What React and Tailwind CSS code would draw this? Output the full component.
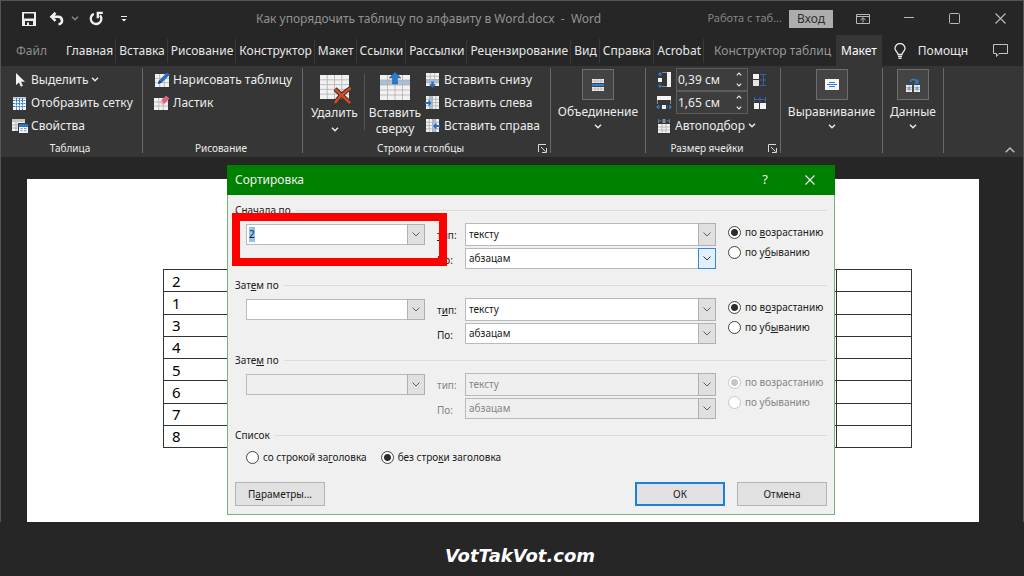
import { useEffect, useRef } from "react";

/* ---------- small shared pieces ---------- */

function Chevron({ className = "h-[5px] w-2" }) {
  return (
    <svg viewBox="0 0 8 5" className={className} fill="none" stroke="currentColor" strokeWidth="1.4" aria-hidden="true">
      <path d="M1 .8 4 3.8 7 .8" />
    </svg>
  );
}

function Launcher({ label }) {
  return (
    <button type="button" aria-label={label} className="text-[#d8d8d8]">
      <svg viewBox="0 0 9 9" className="size-[9px]" fill="none" stroke="currentColor" aria-hidden="true">
        <path d="M.5 8V.5H8M3 3l4.5 4.5M8.5 4v4.5H4" />
      </svg>
    </button>
  );
}

/* ---------- ribbon icons ---------- */

function GridBase({ x = 0, y = 0, w = 14, h = 13, cols = 3, rows = 4, band }) {
  const lines = [];
  for (let i = 1; i < cols; i++) lines.push(`M${x + (w * i) / cols} ${y}v${h}`);
  for (let i = 1; i < rows; i++) lines.push(`M${x} ${y + (h * i) / rows}h${w}`);
  return (
    <g>
      <rect x={x} y={y} width={w} height={h} fill="#f1f1f1" />
      {band && <rect x={band[0]} y={band[1]} width={band[2]} height={band[3]} fill="#a9bfd6" />}
      <path d={lines.join("")} stroke="#b0b0b0" strokeWidth=".8" fill="none" />
    </g>
  );
}

function Icon({ size = "size-4", box = 16, children }) {
  return (
    <svg viewBox={`0 0 ${box} ${box}`} className={`${size} shrink-0`} aria-hidden="true">
      {children}
    </svg>
  );
}

const CursorIcon = () => (
  <Icon>
    <path d="M4 1v12l3-2.600 1.900 4.300 2-.9L9 9.700h4z" fill="#f1f1f1" />
  </Icon>
);
const GridlinesIcon = () => (
  <Icon>
    <rect x="1" y="2" width="13" height="13" fill="#f4f4f4" />
    <rect x="1" y="2" width="13" height="2" fill="#c9c9c9" />
    <path d="M1 5.500h13M1 8.500h13M1 11.500h13M4.500 3v12M7.500 3v12M10.500 3v12" stroke="#2f80d0" strokeWidth="1" strokeDasharray="2 .6" />
  </Icon>
);
const PropertiesIcon = () => (
  <Icon>
    <rect x="0" y="1" width="13" height="12" fill="#f1f1f1" />
    <rect x="0" y="1" width="13" height="3" fill="#c4c4c4" />
    <path d="M0 7h7M0 10h7M4 4v9" stroke="#b0b0b0" />
    <rect x="6" y="5" width="10" height="10" fill="#363636" />
    <rect x="7" y="6" width="9" height="9" fill="#f4f4f4" />
    <rect x="7" y="6" width="9" height="3" fill="#2f76c4" />
    <path d="M8.500 10.500h2M12 10.500h2.500M8.500 12.700h2M12 12.700h2.500" stroke="#7b98b8" />
  </Icon>
);
const DrawTableIcon = () => (
  <Icon>
    <GridBase x={1} y={2} w={14} h={13} cols={3} rows={3} />
    <path d="M4 12l1-3.500L13 .5l3 2L8 10.500z" fill="#2a6cb5" />
    <path d="M4 12l1-3.500L8 10.500z" fill="#17406f" />
  </Icon>
);
const EraserIcon = () => (
  <Icon>
    <GridBase x={0} y={3} w={14} h={12} cols={3} rows={3} />
    <path d="M6 6.500 12 .5l3.500 3L10 9.200H8z" fill="#e0607e" />
    <path d="M6 6.500 8 9.200h2L7.500 5z" fill="#f6b3c0" />
  </Icon>
);
const DeleteIcon = () => (
  <Icon size="size-8" box={32}>
    <GridBase x={1} y={3} w={29} h={24} cols={4} rows={5} />
    <path d="M16 17 31 31M32 16C25 20 20 25 16 31" stroke="#363636" strokeWidth="4.500" fill="none" />
    <path d="M16 17 31 31M32 16C25 20 20 25 16 31" stroke="#d8481f" strokeWidth="2.400" fill="none" />
  </Icon>
);
const InsertAboveIcon = () => (
  <Icon size="size-8" box={32}>
    <GridBase x={1} y={3} w={30} h={25} cols={4} rows={5} band={[1, 8, 30, 5]} />
    <path d="M16 0l6 6h-3.500v6h-5V6H10z" fill="#2a7ad0" stroke="#24527f" strokeWidth=".5" />
  </Icon>
);
const InsertBelowIcon = () => (
  <Icon>
    <GridBase x={1} y={1} w={13} h={13} band={[1, 7, 13, 4]} />
    <path d="M7.500 16 4 12.300h2.300V9.500h2.400v2.800H11z" fill="#1f6ec2" />
  </Icon>
);
const InsertLeftIcon = () => (
  <Icon>
    <GridBase x={1} y={1} w={13} h={13} cols={4} band={[4, 1, 4, 13]} />
    <path d="M6.500 8 3.500 4.500V7H0v2h3.500v2.500z" fill="#1f6ec2" />
  </Icon>
);
const InsertRightIcon = () => (
  <Icon>
    <GridBase x={1} y={1} w={13} h={13} cols={4} band={[7, 1, 4, 13]} />
    <path d="M8 8l3.500-3.500V7H15v2h-3.500v2.500z" fill="#1f6ec2" />
  </Icon>
);
const MergeIcon = () => (
  <Icon>
    <GridBase x={2} y={2} w={12} h={4} cols={4} rows={2} />
    <rect x="2" y="7" width="12" height="2" fill="#2f80d0" />
    <GridBase x={2} y={10} w={12} h={4} cols={4} rows={2} />
  </Icon>
);
const RowHeightIcon = () => (
  <Icon>
    <rect x="11" y="0" width="4" height="15" fill="#f4f4f4" />
    <rect x="2" y="6" width="4" height="4" fill="#f4f4f4" />
    <path d="M6 .5h5M6 14.500h5" stroke="#8a8a8a" />
    <path d="M4 0l2.500 2.800h-5zM4 16l2.500-2.800h-5z" fill="#2f80d0" />
    <path d="M4 3v2.500M4 11v2.500" stroke="#2f80d0" strokeDasharray="1 1" strokeWidth="1.400" />
  </Icon>
);
const ColWidthIcon = () => (
  <Icon>
    <rect x="1" y="1" width="14" height="4" fill="#f4f4f4" />
    <rect x="6" y="10" width="4" height="4" fill="#f4f4f4" />
    <path d="M1.500 5v4M14.500 5v4" stroke="#8a8a8a" />
    <path d="M0 12l2.800-2.500v5zM16 12l-2.800-2.500v5z" fill="#2f80d0" />
    <path d="M3 12h2.500M11 12h2.500" stroke="#2f80d0" strokeDasharray="1 1" strokeWidth="1.400" />
  </Icon>
);
const AutoFitIcon = () => (
  <Icon>
    <GridBase x={2} y={6} w={12} h={9} cols={3} rows={3} />
    <path d="M2.500 1v4M13.500 1v4M3 3h2.500M10.500 3H13" stroke="#4d86bf" />
    <rect x="6.500" y="1" width="3" height="4" fill="#8c8c8c" />
  </Icon>
);
const DistributeRowsIcon = () => (
  <Icon>
    <rect x="1" y="2" width="6" height="5" fill="#f4f4f4" />
    <rect x="1" y="8" width="6" height="6" fill="#e4e4e4" />
    <path d="M11.500 2v12M8 2.500h6M8 8h6M8 13.500h6" stroke="#2f68a4" />
  </Icon>
);
const DistributeColsIcon = () => (
  <Icon>
    <rect x="2" y="8" width="5" height="6" fill="#f4f4f4" />
    <rect x="8" y="8" width="6" height="6" fill="#f4f4f4" />
    <path d="M2 4.500h12M2.500 2v5M8 2v5M13.500 2v5" stroke="#2f68a4" />
  </Icon>
);
const AlignIcon = () => (
  <Icon>
    <rect x="1" y="2" width="14" height="11" fill="#f7f7f7" />
    <path d="M5 5.500h6M3 7.500h10M5 9.500h6" stroke="#2f80d0" strokeWidth="1.200" />
  </Icon>
);
const DataIcon = () => (
  <Icon>
    <GridBase x={1} y={8} w={6} h={7} cols={2} rows={3} />
    <GridBase x={9} y={8} w={6} h={7} cols={2} rows={3} />
    <path d="M2.500 10h3v3h-3zM10.500 10h3v3h-3z" fill="#6fa5dd" />
    <path d="M5 5c1-3 5-3.500 7-.5" stroke="#2f80d0" strokeWidth="1.400" fill="none" />
    <path d="M13.500 2v4.500H9z" fill="#2f80d0" />
  </Icon>
);

/* ---------- window chrome ---------- */

function TitleBar() {
  return (
    <header className="flex h-[34px] items-center pt-px">
      <div className="flex w-[255px] shrink-0 items-center pl-[21px] text-[#f0f0f0]">
        <button type="button" aria-label="Сохранить">
          <svg viewBox="0 0 14 14" className="size-[14px]" aria-hidden="true">
            <path fillRule="evenodd" fill="currentColor" d="M0 0h14v14H0zM2 1.500v5h10v-5zM3 9v4h2v-2.500h2V13h4V9z" />
          </svg>
        </button>
        <button type="button" aria-label="Отменить" className="ml-[13px]">
          <svg viewBox="0 0 16 14" className="h-[14px] w-4" fill="none" stroke="currentColor" strokeWidth="2.600" aria-hidden="true">
            <path d="M6.500 .8 2.500 4.800 6.500 8.800M2.500 4.800h6.500c5 0 5.500 7.200.5 7.500" />
          </svg>
        </button>
        <button type="button" aria-label="Список отмены" className="ml-[6px] text-[#8a8a8a]">
          <Chevron />
        </button>
        <button type="button" aria-label="Повторить" className="ml-[10px]">
          <svg viewBox="0 0 15 15" className="size-[15px]" fill="none" stroke="currentColor" strokeWidth="2.300" aria-hidden="true">
            <path d="M4.800 2.900A5.300 5.300 0 1 0 11 4.200M8.800 7.200V1.800h5" />
          </svg>
        </button>
        <button type="button" aria-label="Настройка панели" className="ml-[17px]">
          <svg viewBox="0 0 6 6" className="size-[6px]" fill="currentColor" aria-hidden="true">
            <path d="M0 0h6v1H0zM.5 3h5L3 5.500z" />
          </svg>
        </button>
      </div>
      <h1 className="whitespace-pre text-[12px] text-[#929292]">Как упорядочить таблицу по алфавиту в Word.docx  -  Word</h1>
      <div className="ml-auto flex items-center pr-[17px] text-[#b8b8b8]">
        <span className="text-[11px] text-[#858585]">Работа с таб...</span>
        <button type="button" className="ml-[7px] h-[18px] w-[44px] bg-[#adadad] text-[12px] leading-[18px] text-[#303030]">Вход</button>
        <button type="button" aria-label="Параметры ленты" className="ml-[23px]">
          <svg viewBox="0 0 14 12" className="h-3 w-[14px]" fill="none" stroke="currentColor" aria-hidden="true">
            <path d="M.5 1.500h13v9H.5zM.5 3.500h13M7 9.500V5M4.500 7 7 4.800 9.500 7" />
          </svg>
        </button>
        <button type="button" aria-label="Свернуть" className="ml-[34px]">
          <svg viewBox="0 0 10 10" className="size-[10px]" stroke="currentColor" aria-hidden="true"><path d="M0 3.500h10" /></svg>
        </button>
        <button type="button" aria-label="Развернуть" className="ml-[35px]">
          <svg viewBox="0 0 11 11" className="size-[11px]" fill="none" stroke="currentColor" aria-hidden="true"><rect x=".5" y=".5" width="10" height="10" rx="1" /></svg>
        </button>
        <button type="button" aria-label="Закрыть" className="ml-[35px]">
          <svg viewBox="0 0 11 11" className="size-[11px]" stroke="currentColor" strokeWidth="1.200" aria-hidden="true"><path d="M.5.5l10 10M10.500.5l-10 10" /></svg>
        </button>
      </div>
    </header>
  );
}

const TABS = ["Главная", "Вставка", "Рисование", "Конструктор", "Макет", "Ссылки", "Рассылки", "Рецензирование", "Вид", "Справка", "Acrobat"];

function TabBar() {
  return (
    <nav aria-label="Вкладки ленты" className="flex h-[31px] items-center gap-px whitespace-nowrap text-[12px] text-[#e6e6e6]">
      <button type="button" className="mr-4 pl-[15px] text-[#8c8c8c]">Файл</button>
      {TABS.map((tab) => (
        <button key={tab} type="button" className="h-6 border-r border-[#3a3a3a] px-[2px]">{tab}</button>
      ))}
      <button type="button" className="pr-1 pl-[9px] text-[#989898]">Конструктор таблиц</button>
      <button type="button" className="h-[31px] bg-[#363636] px-[5px] text-white">Макет</button>
      <button type="button" className="ml-[11px] flex items-center gap-3">
        <svg viewBox="0 0 12 16" className="h-4 w-3" fill="none" stroke="currentColor" strokeWidth="1.300" aria-hidden="true">
          <path d="M4 11.500C4 9 1 8.500 1 5.500a5 5 0 0 1 10 0c0 3-3 3.500-3 6zM4 13.500h4M4.500 15.300h3" />
        </svg>
        <span>Помощн</span>
      </button>
      <button type="button" aria-label="Примечания" className="mr-[15px] ml-auto text-[#c4c4c4]">
        <svg viewBox="0 0 15 13" className="h-[13px] w-[15px]" fill="none" stroke="currentColor" aria-hidden="true">
          <path d="M.5.5h14v9H6l-2.500 3v-3h-3z" />
        </svg>
      </button>
    </nav>
  );
}

/* ---------- ribbon ---------- */

function Group({ width, label, launcher, children }) {
  return (
    <section className={`flex h-[85px] shrink-0 flex-col border-r border-[#6a6a6a] ${width}`}>
      <div className="flex flex-1">{children}</div>
      {label && (
        <div className="flex h-[9px] items-center pr-[3px] text-[10px] leading-[9px]">
          <h2 className="flex-1 text-center">{label}</h2>
          {launcher && <Launcher label={`${label}: параметры`} />}
        </div>
      )}
    </section>
  );
}

function SmallCommand({ icon, children, menu }) {
  return (
    <button type="button" className="flex h-[23px] items-center gap-[3px] whitespace-nowrap">
      {icon}
      <span>{children}</span>
      {menu && <Chevron />}
    </button>
  );
}

function FramedCommand({ icon, children }) {
  return (
    <button type="button" className="flex flex-1 flex-col items-center pt-px">
      <span className="flex h-[31px] w-8 items-center justify-center border border-[#6e6e6e] bg-[#444444]">{icon}</span>
      <span className="mt-1 leading-4">{children}</span>
      <Chevron className="mt-1 h-[5px] w-2" />
    </button>
  );
}

function SizeField({ label, value }) {
  return (
    <div className="flex h-[23px] w-[72px] items-center border border-[#5c5c5c] bg-[#3d3d3d] pr-[5px]">
      <input aria-label={label} defaultValue={value} className="w-full min-w-0 bg-transparent pl-px text-[12px] outline-none" />
      <span className="flex flex-col gap-[7px]">
        <button type="button" aria-label={`${label}: больше`}><Chevron className="block h-1 w-[6px] rotate-180" /></button>
        <button type="button" aria-label={`${label}: меньше`}><Chevron className="block h-1 w-[6px]" /></button>
      </span>
    </div>
  );
}

function Ribbon() {
  return (
    <div className="flex h-[91px] bg-[#363636] pt-[2px] text-[12px] text-[#ececec]">
      <Group width="w-[142px]" label="Таблица">
        <div className="flex flex-col pl-[11px]">
          <SmallCommand icon={<CursorIcon />} menu>Выделить</SmallCommand>
          <SmallCommand icon={<GridlinesIcon />}>Отобразить сетку</SmallCommand>
          <SmallCommand icon={<PropertiesIcon />}>Свойства</SmallCommand>
        </div>
      </Group>
      <Group width="w-[160px]" label="Рисование">
        <div className="flex flex-col pl-[11px]">
          <SmallCommand icon={<DrawTableIcon />}>Нарисовать таблицу</SmallCommand>
          <SmallCommand icon={<EraserIcon />}>Ластик</SmallCommand>
        </div>
      </Group>
      <Group width="w-[248px]" label="Строки и столбцы" launcher>
        <button type="button" className="flex w-[61px] flex-col items-center pt-1 pl-[2px]">
          <DeleteIcon />
          <span className="mt-px leading-4">Удалить</span>
          <Chevron className="mt-[6px] h-[5px] w-2" />
        </button>
        <div className="mt-[6px] h-14 w-px bg-[#555555]" />
        <button type="button" className="flex w-[60px] flex-col items-center pt-1">
          <InsertAboveIcon />
          <span className="mt-px leading-4">Вставить<br />сверху</span>
        </button>
        <div className="flex flex-col">
          <SmallCommand icon={<InsertBelowIcon />}>Вставить снизу</SmallCommand>
          <SmallCommand icon={<InsertLeftIcon />}>Вставить слева</SmallCommand>
          <SmallCommand icon={<InsertRightIcon />}>Вставить справа</SmallCommand>
        </div>
      </Group>
      <Group width="w-[95px]">
        <FramedCommand icon={<MergeIcon />}>Объединение</FramedCommand>
      </Group>
      <Group width="w-[135px]" label="Размер ячейки" launcher>
        <div className="flex flex-col pl-[10px]">
          <div className="flex items-center gap-1">
            <RowHeightIcon />
            <SizeField label="Высота" value="0,39 см" />
            <button type="button" aria-label="Выровнять высоту строк"><DistributeRowsIcon /></button>
          </div>
          <div className="flex items-center gap-1">
            <ColWidthIcon />
            <SizeField label="Ширина" value="1,65 см" />
            <button type="button" aria-label="Выровнять ширину столбцов"><DistributeColsIcon /></button>
          </div>
          <SmallCommand icon={<AutoFitIcon />} menu>Автоподбор</SmallCommand>
        </div>
      </Group>
      <Group width="w-[102px]">
        <FramedCommand icon={<AlignIcon />}>Выравнивание</FramedCommand>
      </Group>
      <Group width="w-[61px]">
        <FramedCommand icon={<DataIcon />}>Данные</FramedCommand>
      </Group>
      <button type="button" aria-label="Свернуть ленту" className="mr-2 mb-1 ml-auto self-end">
        <svg viewBox="0 0 10 6" className="h-[6px] w-[10px]" fill="none" stroke="#c0c0c0" strokeWidth="1.400" aria-hidden="true"><path d="M.7 5.300 5 1l4.300 4.300" /></svg>
      </button>
    </div>
  );
}

/* ---------- document ---------- */

const ROWS = [2, 1, 3, 4, 5, 6, 7, 8];
const EMPTY_COLUMNS = [1, 2, 3, 4, 5, 6, 7, 8, 9];

function DocumentPage() {
  return (
    <main className="flex flex-1 pt-[22px] pr-11 pl-[26px]">
      <div className="flex-1 bg-white pt-[90px] pr-[67px] pl-[136px]">
        <table className="h-[179px] w-full table-fixed border-collapse text-[15px] leading-[18px] text-black">
          <tbody>
            {ROWS.map((n) => (
              <tr key={n}>
                <td className="border border-[#333333] pl-2">{n}</td>
                {EMPTY_COLUMNS.map((c) => (
                  <td key={c} className="border border-[#333333]" />
                ))}
              </tr>
            ))}
          </tbody>
        </table>
      </div>
    </main>
  );
}

/* ---------- dialog ---------- */

function Arrow({ hot }) {
  return (
    <span className={`pointer-events-none col-start-1 row-start-1 flex w-[18px] items-center justify-center justify-self-end border ${hot ? "border-[#2f8ae0] bg-[#e3effa] text-[#333333]" : "border-[#b0b0b0] bg-[#e0e0e0] text-[#606060]"}`}>
      <svg viewBox="0 0 8 5" className="h-[5px] w-2" fill="none" stroke="currentColor" aria-hidden="true"><path d="M.5.5 4 4 7.500.5" /></svg>
    </span>
  );
}

function Select({ id, label, value, size, disabled, hot }) {
  return (
    <span className={`grid ${size}`}>
      <select id={id} aria-label={label} disabled={disabled} defaultValue={value} className="col-start-1 row-start-1 w-full appearance-none border border-[#b8babd] bg-white pr-5 pl-[3px] text-[#202020] outline-none disabled:bg-[#efefef] disabled:text-[#858585] disabled:opacity-100">
        <option>{value}</option>
      </select>
      <Arrow hot={hot} />
    </span>
  );
}

function KeyCombo({ label }) {
  const field = useRef(null);
  useEffect(() => {
    field.current.focus();
    field.current.select();
  }, []);
  return (
    <span className="grid h-[21px]">
      <input ref={field} aria-label={label} defaultValue="2" className="col-start-1 row-start-1 w-full border border-[#b8babd] bg-white pl-[2px] text-[#202020] outline-none selection:bg-[#90c3f0] selection:text-[#202020]" />
      <Arrow />
    </span>
  );
}

function Radio({ name, checked, disabled, children }) {
  return (
    <label className={`flex h-5 items-center gap-1 whitespace-nowrap ${disabled ? "text-[#858585]" : ""}`}>
      <input
        type="radio"
        name={name}
        defaultChecked={checked}
        disabled={disabled}
        className="size-[13px] shrink-0 appearance-none rounded-full border border-[#444444] bg-white checked:bg-[radial-gradient(circle,#2b2b2b_3px,white_4px)] disabled:border-[#c6c6c6] checked:disabled:bg-[radial-gradient(circle,#c6c6c6_3px,white_4px)]"
      />
      <span>{children}</span>
    </label>
  );
}

function Legend({ children }) {
  return (
    <div className="flex h-4 items-center gap-[5px]">
      <h3>{children}</h3>
      <span className="h-px flex-1 bg-[#dcdcdc]" />
    </div>
  );
}

function SortLevel({ id, title, editable, typeLabel, up, down, disabled, hot }) {
  const dim = disabled ? "text-[#858585]" : "";
  return (
    <section className="h-[75px]">
      <Legend>{title}</Legend>
      <div className="mt-[5px] grid grid-cols-[179px_40px_251px_1fr] pl-[11px]">
        <div className="pt-px">
          {editable ? <KeyCombo label="Сначала по" /> : <Select id={`${id}-key`} label="Затем по" value="" size="h-[21px]" disabled={disabled} />}
        </div>
        <div className={`flex flex-col gap-[1px] pl-3 leading-6 ${dim}`}>
          <label htmlFor={`${id}-type`}>{typeLabel}</label>
          <label htmlFor={`${id}-by`}>По:</label>
        </div>
        <div className="flex flex-col gap-[2px]">
          <Select id={`${id}-type`} value="тексту" size="h-[23px]" disabled={disabled} />
          <Select id={`${id}-by`} value="абзацам" size="h-[21px]" disabled={disabled} hot={hot} />
        </div>
        <div className="-mt-px pl-3">
          <Radio name={`${id}-order`} checked disabled={disabled}>{up}</Radio>
          <Radio name={`${id}-order`} disabled={disabled}>{down}</Radio>
        </div>
      </div>
    </section>
  );
}

function SortDialog() {
  return (
    <div role="dialog" aria-label="Сортировка" className="absolute top-[165px] left-[227px] w-[608px] border border-t-0 border-[#6fb86f] bg-[#f0f0f0] text-[10px] text-[#202020]">
      <div className="-mx-px flex h-[30px] items-center bg-[#008000] pr-5 pl-2 text-[#f2f2f2]">
        <h2 className="text-[12px]">Сортировка</h2>
        <button type="button" aria-label="Справка" className="ml-auto text-[13px]">?</button>
        <button type="button" aria-label="Закрыть" className="ml-[37px]">
          <svg viewBox="0 0 10 10" className="size-[10px]" stroke="currentColor" strokeWidth="1.200" aria-hidden="true"><path d="M.5.5l9 9M9.500.5l-9 9" /></svg>
        </button>
      </div>
      <form className="px-[7px] pt-[7px] pb-2">
        <SortLevel id="first" title="Сначала по" editable hot typeLabel={<><u>т</u>ип:</>} up={<>по <u>в</u>озрастанию</>} down={<>по у<u>б</u>ыванию</>} />
        <SortLevel id="second" title={<>Зат<u>е</u>м по</>} typeLabel={<>т<u>и</u>п:</>} up={<>по в<u>о</u>зрастанию</>} down={<>по уб<u>ы</u>ванию</>} />
        <SortLevel id="third" title={<>Зате<u>м</u> по</>} typeLabel="тип:" up="по возрастанию" down="по убыванию" disabled />
        <Legend>Список</Legend>
        <div className="mt-1 flex gap-[14px] pl-[11px]">
          <Radio name="header">со строкой за<u>г</u>оловка</Radio>
          <Radio name="header" checked>без стро<u>к</u>и заголовка</Radio>
        </div>
        <div className="mt-[15px] flex gap-3">
          <button type="button" className="mr-auto h-6 w-[90px] border border-[#b4b4b4] bg-[#e1e1e1]">П<u>а</u>раметры...</button>
          <button type="submit" className="h-6 w-[90px] border-2 border-[#1a80d8] bg-[#e1e1e1]">ОК</button>
          <button type="button" className="h-6 w-[90px] border border-[#b4b4b4] bg-[#e1e1e1]">Отмена</button>
        </div>
      </form>
      <div className="pointer-events-none absolute top-[48px] left-1 h-[53px] w-[215px] border-8 border-[#ff0000]" />
    </div>
  );
}

export default function App() {
  return (
    <div className="relative flex min-h-screen flex-col bg-[#262626] font-['Noto_Sans',sans-serif]">
      <div className="flex flex-1 flex-col border-x border-t border-[#555555]">
        <TitleBar />
        <TabBar />
        <Ribbon />
        <DocumentPage />
      </div>
      <footer className="flex h-[54px] items-center justify-center pt-3 pl-4 font-['DejaVu_Sans',sans-serif] text-[18px] font-bold text-white italic">VotTakVot.com</footer>
      <SortDialog />
    </div>
  );
}
